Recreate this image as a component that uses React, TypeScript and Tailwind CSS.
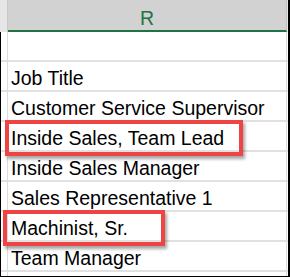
import React from "react";

const rows = [
  "",
  "Job Title",
  "Customer Service Supervisor",
  "Inside Sales, Team Lead",
  "Inside Sales Manager",
  "Sales Representative 1",
  "Machinist, Sr.",
  "Team Manager",
  "",
];

export default function App() {
  return (
    <div
      className="relative w-[290px] h-[277px] overflow-hidden bg-white border-r-2 border-b border-black flex flex-col"
      style={{ fontFamily: '"Liberation Sans", Arial, sans-serif' }}
    >
      {/* header */}
      <div className="flex h-[32px] shrink-0">
        <div className="w-[8px] bg-[#e6e6e6] border-r border-[#c8c8c8]" />
        <div className="w-[279px] bg-[#d2d2d2] border-b-2 border-[#217346] border-r border-r-[#c0c0c0] text-center text-[19.5px] leading-[24px] pt-[6px] text-[#217346]">
          R
        </div>
        <div className="w-[1px] bg-[#e6e6e6]" />
      </div>
      {/* body */}
      <div className="flex flex-col border-l border-black">
        {rows.map((r, i) => (
          <div key={i} className="flex h-[30px] shrink-0 border-b-2 border-[#e1e1e1]">
            <div className="w-[7px] border-r border-[#dcdcdc]" />
            <div className="w-[279px] border-r border-[#dcdcdc] pl-[3px] pt-[5px] text-[19.5px] leading-[23px] text-black whitespace-nowrap overflow-hidden">
              {r}
            </div>
            <div className="w-[1px]" />
          </div>
        ))}
      </div>
      {/* callout boxes */}
      <div className="absolute left-[5px] top-[120px] w-[238px] h-[36px] border-4 border-[#ef4444] shadow-[2px_3px_3px_rgba(0,0,0,0.35)]" />
      <div className="absolute left-[3px] top-[210px] w-[162px] h-[36px] border-4 border-[#ef4444] shadow-[2px_3px_3px_rgba(0,0,0,0.35)]" />
    </div>
  );
}
